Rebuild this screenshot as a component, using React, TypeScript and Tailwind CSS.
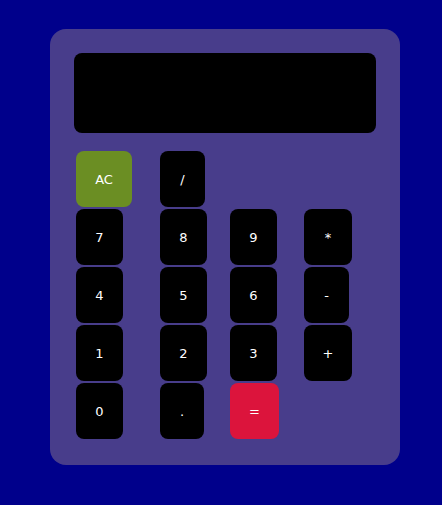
import React from 'react';

type Key = { label: string; w: string; bg?: string };

const rows: (Key | null)[][] = [
  [{ label: 'AC', w: 'w-[56px]', bg: 'bg-[#6b8e23]' }, { label: '/', w: 'w-[45px]' }, null, null],
  [{ label: '7', w: 'w-[47px]' }, { label: '8', w: 'w-[47px]' }, { label: '9', w: 'w-[47px]' }, { label: '*', w: 'w-[48px]' }],
  [{ label: '4', w: 'w-[47px]' }, { label: '5', w: 'w-[47px]' }, { label: '6', w: 'w-[47px]' }, { label: '-', w: 'w-[45px]' }],
  [{ label: '1', w: 'w-[47px]' }, { label: '2', w: 'w-[47px]' }, { label: '3', w: 'w-[47px]' }, { label: '+', w: 'w-[48px]' }],
  [{ label: '0', w: 'w-[47px]' }, { label: '.', w: 'w-[44px]' }, { label: '=', w: 'w-[49px]', bg: 'bg-[#dc143c]' }, null],
];

const App: React.FC = () => {
  return (
    <div className="min-h-screen bg-[#00008b] pt-[29px] pl-[50px] font-['DejaVu_Sans',sans-serif]">
      <div className="w-[350px] rounded-2xl bg-[#483d8b] px-6 pt-6 pb-[26px]">
        {/* display */}
        <div className="h-20 rounded-lg bg-black" />
        {/* keypad */}
        <div className="mt-[18px] ml-[2px] grid grid-cols-[84px_70px_74px_auto] gap-y-[2px]">
          {rows.flat().map((k, i) =>
            k ? (
              <button
                key={i}
                className={`${k.w} h-14 rounded-lg ${k.bg ?? 'bg-black'} pt-[2px] text-[13px] text-white flex items-center justify-center`}
              >
                {k.label}
              </button>
            ) : (
              <div key={i} className="h-14" />
            )
          )}
        </div>
      </div>
    </div>
  );
};

export default App;
